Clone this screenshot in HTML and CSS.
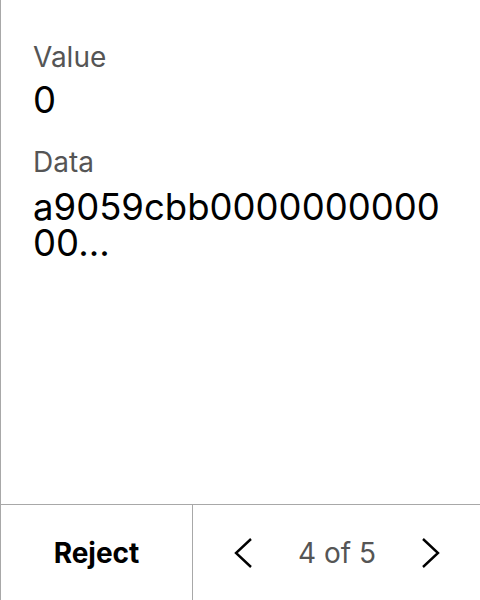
FILE: index.html
```html
<!DOCTYPE html>
<html>
<head>
<meta charset="utf-8">
<link rel="stylesheet" href="styles.css">
</head>
<body>
<div class="screen">
  <div class="content">
    <div class="field">
      <div class="label">Value</div>
      <div class="value">0</div>
    </div>
    <div class="field">
      <div class="label">Data</div>
      <div class="value data">a9059cbb000000000000...</div>
    </div>
  </div>
  <div class="footer">
    <div class="reject">Reject</div>
    <div class="pager">
      <svg class="chev" width="20" height="32" viewBox="0 0 20 32"><path d="M17 2 L2 16 L17 30" fill="none" stroke="#000" stroke-width="2.4"/></svg>
      <span class="count">4 of 5</span>
      <svg class="chev" width="20" height="32" viewBox="0 0 20 32"><path d="M3 2 L18 16 L3 30" fill="none" stroke="#000" stroke-width="2.4"/></svg>
    </div>
  </div>
</div>
</body>
</html>
```
FILE: styles.css
```css
* { box-sizing: border-box; }
html, body { margin: 0; padding: 0; background: #fff; }
body { font-family: Inter, "Noto Sans", sans-serif; }
.screen {
  width: 480px;
  height: 600px;
  border-left: 1px solid #a8a8a8;
  display: flex;
  flex-direction: column;
}
.content {
  flex: 1;
  padding: 40px 32px 0 32px;
  display: flex;
  flex-direction: column;
  gap: 27px;
}
.label {
  font-size: 28px;
  line-height: 34px;
  color: #555;
}
.value {
  font-size: 36.5px;
  line-height: 36px;
  color: #000;
  margin-top: 8px;
}
.data {
  word-break: break-all;
  margin-top: 10px;
}
.footer {
  height: 96px;
  border-top: 1px solid #a8a8a8;
  display: flex;
}
.reject {
  width: 192px;
  border-right: 1px solid #a8a8a8;
  display: flex;
  align-items: center;
  justify-content: center;
  font-size: 28px;
  font-weight: 700;
  color: #000;
}
.pager {
  flex: 1;
  display: flex;
  align-items: center;
  justify-content: space-between;
  padding: 0 40px 0 41px;
}
.count {
  font-size: 28px;
  color: #555;
}
```
